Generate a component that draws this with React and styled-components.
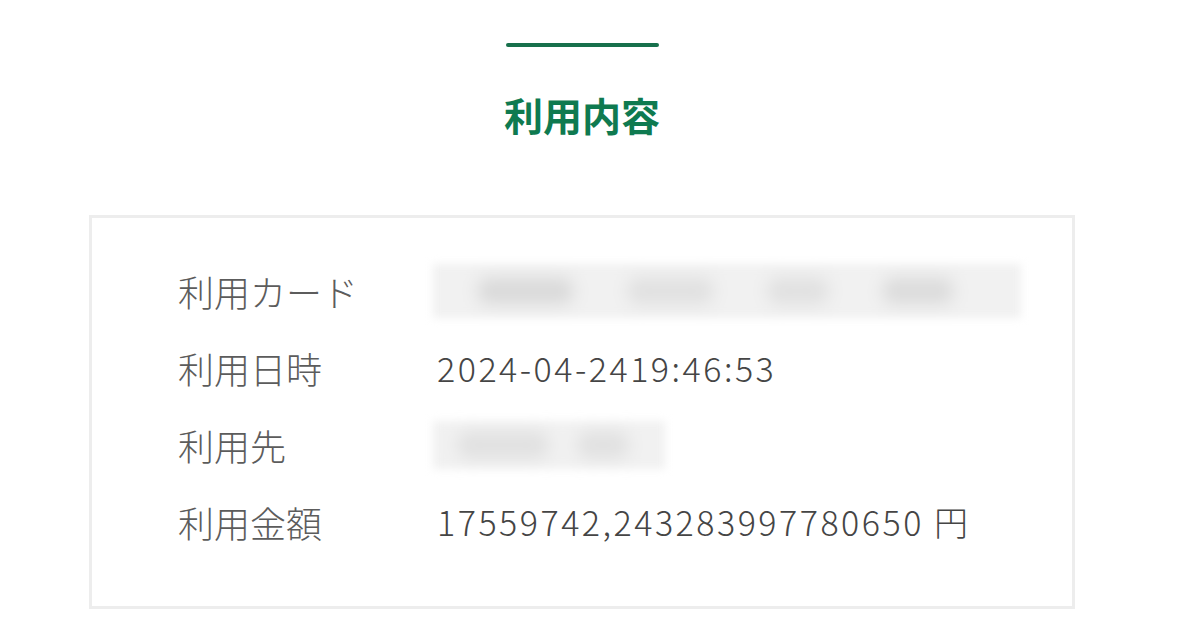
import React from 'react';
import styled, { createGlobalStyle } from 'styled-components';

const GlobalStyle = createGlobalStyle`
  html, body {
    margin: 0;
    background: #fff;
  }
  body {
    font-family: "Noto Sans CJK JP", "Noto Sans", sans-serif;
  }
`;

const Page = styled.div`
  width: 986px;
  margin-left: 89px;
  padding-top: 43px;
  display: flex;
  flex-direction: column;
  align-items: center;
`;

const Rule = styled.div`
  width: 153px;
  height: 4px;
  background: #17704c;
  border-radius: 2px;
`;

const Title = styled.h2`
  margin: 48px 0 0;
  font-size: 39px;
  font-weight: 700;
  line-height: 1;
  color: #0f7a50;
`;

const Card = styled.section`
  box-sizing: border-box;
  width: 100%;
  margin-top: 81px;
  border: 3px solid #ededed;
  padding: 34px 0 46px 86px;
  display: flex;
  flex-direction: column;
`;

const Row = styled.div`
  height: 77px;
  display: grid;
  grid-template-columns: 259px 1fr;
  align-items: center;
`;

const Label = styled.span`
  font-size: 36px;
  font-weight: 300;
  color: #5c5c5c;
  line-height: 1;
`;

const Value = styled.span`
  font-size: 34px;
  font-weight: 300;
  color: #454545;
  line-height: 1;
  letter-spacing: 2.5px;
`;

const Blur = styled.div`
  width: ${(p) => p.$w}px;
  height: ${(p) => p.$h}px;
  margin-left: -4px;
  background: #f1f1f1;
  display: flex;
  align-items: center;
  gap: ${(p) => p.$gap}px;
  padding-left: ${(p) => p.$pad}px;
  box-sizing: border-box;
  filter: blur(4px);
`;

const Blob = styled.div`
  width: ${(p) => p.$w}px;
  height: 26px;
  border-radius: 10px;
  background: ${(p) => p.$c || '#e0e0e0'};
  filter: blur(7px);
`;

export default function App() {
  return (
    <>
      <GlobalStyle />
      <Page>
        <Rule />
        <Title>利用内容</Title>
        <Card>
          <Row>
            <Label>利用カード</Label>
            <Blur $w={588} $h={54} $gap={55} $pad={45}>
              <Blob $w={95} $c="#d9d9d9" />
              <Blob $w={85} />
              <Blob $w={60} />
              <Blob $w={70} $c="#dbdbdb" />
            </Blur>
          </Row>
          <Row>
            <Label>利用日時</Label>
            <Value>2024-04-2419:46:53</Value>
          </Row>
          <Row>
            <Label>利用先</Label>
            <Blur $w={232} $h={48} $gap={30} $pad={25}>
              <Blob $w={90} />
              <Blob $w={50} />
            </Blur>
          </Row>
          <Row>
            <Label>利用金額</Label>
            <Value>17559742,243283997780650 円</Value>
          </Row>
        </Card>
      </Page>
    </>
  );
}
